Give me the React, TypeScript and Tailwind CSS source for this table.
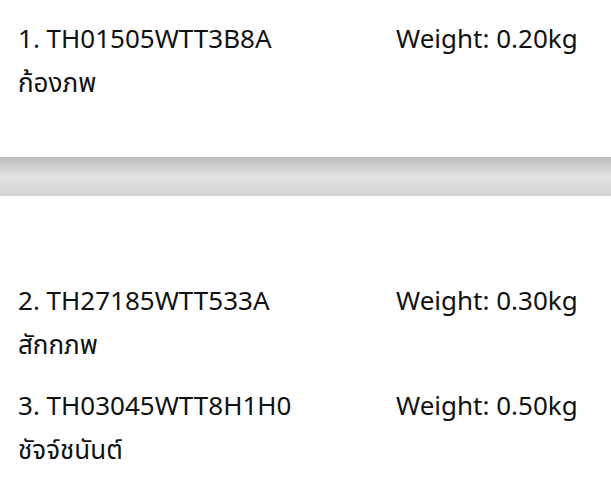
import React from 'react';

const items = [
  { no: 1, code: 'TH01505WTT3B8A', weight: '0.20kg', name: 'ก้องภพ' },
  { no: 2, code: 'TH27185WTT533A', weight: '0.30kg', name: 'สักกภพ' },
  { no: 3, code: 'TH03045WTT8H1H0', weight: '0.50kg', name: 'ชัจจ์ชนันต์' },
];

function Item({ item }: { item: (typeof items)[number] }) {
  return (
    <div className="px-[18px]">
      <div className="flex h-[44px] items-center">
        <span className="w-[378px]">
          {item.no}. {item.code}
        </span>
        <span>Weight: {item.weight}</span>
      </div>
      <div className="flex h-[44px] items-center">{item.name}</div>
    </div>
  );
}

export default function App() {
  return (
    <div
      className="w-[611px] h-[491px] bg-white text-[#111] text-[26px] overflow-hidden"
      style={{ fontFamily: '"Noto Sans", "Noto Sans Thai", sans-serif' }}
    >
      {/* first parcel */}
      <div className="pt-[16px] h-[157px]">
        <Item item={items[0]} />
      </div>

      {/* section divider */}
      <div className="h-[39px] bg-gradient-to-b from-[#bcbcbc] via-[#e4e4e4] to-[#d2d2d2]" />

      {/* remaining parcels */}
      <div className="pt-[82px] flex flex-col gap-[17px]">
        <Item item={items[1]} />
        <Item item={items[2]} />
      </div>
    </div>
  );
}
